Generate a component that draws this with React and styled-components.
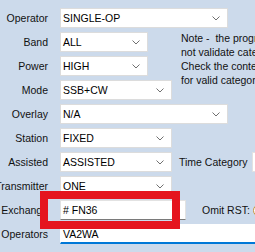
import React from 'react';
import styled, { createGlobalStyle } from 'styled-components';

const GlobalStyle = createGlobalStyle`
  html, body { margin: 0; padding: 0; background: #CCDAEB; overflow: hidden; }
  body { font-family: "Liberation Sans", Arial, sans-serif; font-size: 10.5px; color: #000; }
`;

const Form = styled.div`
  position: relative;
  display: grid;
  grid-template-columns: 50px 1fr;
  grid-auto-rows: 20px;
  column-gap: 10px;
  row-gap: 4px;
  padding-top: 8px;
  width: 255px;
  height: 252px;
  box-sizing: border-box;
  overflow: hidden;
`;

const Label = styled.div`
  grid-column: 1;
  grid-row: ${p => p.$row};
  display: flex;
  align-items: center;
  justify-content: flex-end;
  white-space: nowrap;
  padding-right: 2px;
  color: #111;
`;

const Row = styled.div`
  grid-column: 2;
  grid-row: ${p => p.$row};
  display: flex;
  align-items: stretch;
  white-space: nowrap;
`;

const Select = styled.div`
  width: ${p => p.$w}px;
  flex: none;
  box-sizing: border-box;
  background: #fff;
  border: 1px solid #dcdcdc;
  display: flex;
  align-items: center;
  padding: 0 7px 0 2px;
`;

const Chevron = styled.svg`
  margin-left: auto;
  width: 8px;
  height: 5px;
`;

const TextBox = styled.div`
  width: ${p => p.$w}px;
  flex: none;
  box-sizing: border-box;
  background: #fff;
  border: 1px solid ${p => (p.$focus ? '#fff' : '#e2e2e2')};
  border-bottom: ${p => (p.$focus ? '2px solid #0078d7' : '1px solid #7a7a7a')};
  display: flex;
  align-items: center;
  padding-left: 2px;
`;

const Note = styled.div`
  grid-column: 2;
  grid-row: 2 / 6;
  padding-left: 121px;
  margin-top: -1px;
  line-height: 14px;
  white-space: pre;
  overflow: hidden;
  color: #111;
`;

const SideLabel = styled.span`
  margin-left: ${p => p.$gap}px;
  display: flex;
  align-items: center;
  color: #111;
`;

const SideBox = styled.div`
  margin-left: 5px;
  width: 20px;
  flex: none;
  background: #fff;
  border: 1px solid #e2e2e2;
`;

const Radio = styled.div`
  margin-left: 3px;
  align-self: center;
  width: 11px;
  height: 11px;
  flex: none;
  border-radius: 50%;
  border: 1px solid #c8923a;
  background: #fff;
`;

const Highlight = styled.div`
  position: absolute;
  left: 40px;
  top: 191px;
  width: 140px;
  height: 38px;
  box-sizing: border-box;
  border: 8px solid #E5141E;
  pointer-events: none;
`;

const rows = [
  { label: 'Operator', value: 'SINGLE-OP', w: 168 },
  { label: 'Band', value: 'ALL', w: 88 },
  { label: 'Power', value: 'HIGH', w: 88 },
  { label: 'Mode', value: 'SSB+CW', w: 112 },
  { label: 'Overlay', value: 'N/A', w: 168 },
  { label: 'Station', value: 'FIXED', w: 112 },
  { label: 'Assisted', value: 'ASSISTED', w: 112, side: 'time' },
  { label: 'Transmitter', value: 'ONE', w: 112 },
];

const ChevronIcon = () => (
  <Chevron viewBox="0 0 8 5">
    <path d="M0.5 0.5 L4 4 L7.5 0.5" fill="none" stroke="#707070" strokeWidth="1" />
  </Chevron>
);

export default function App() {
  return (
    <>
      <GlobalStyle />
      <Form>
        {rows.map((r, i) => (
          <React.Fragment key={r.label}>
            <Label $row={i + 1}>{r.label}</Label>
            <Row $row={i + 1}>
              <Select $w={r.w}>
                {r.value}
                <ChevronIcon />
              </Select>
              {r.side === 'time' && (
                <>
                  <SideLabel $gap={7}>Time Category</SideLabel>
                  <SideBox />
                </>
              )}
            </Row>
          </React.Fragment>
        ))}
        <Note>
          {'Note -  the program does\nnot validate category\nCheck the contest rules\nfor valid categories'}
        </Note>
        <Label $row={9}>Exchange</Label>
        <Row $row={9}>
          <TextBox $w={126}># FN36</TextBox>
          <SideLabel $gap={16}>Omit RST:</SideLabel>
          <Radio />
        </Row>
        <Label $row={10}>Operators</Label>
        <Row $row={10}>
          <TextBox $w={200} $focus>VA2WA</TextBox>
        </Row>
        <Highlight />
      </Form>
    </>
  );
}
